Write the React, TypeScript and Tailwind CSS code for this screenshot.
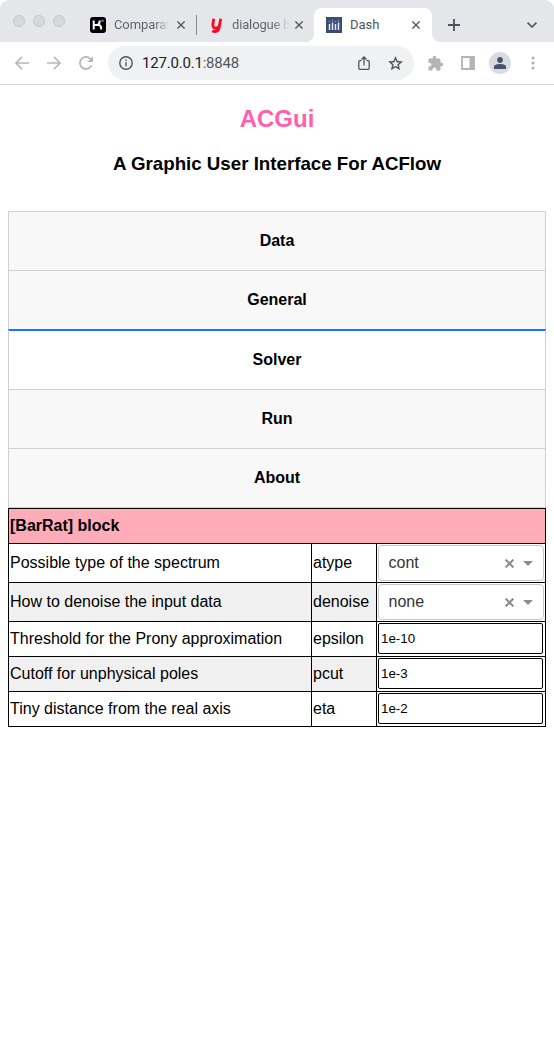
import React from "react";

function Close({ className = "" }: { className?: string }) {
  return (
    <svg viewBox="0 0 8 8" className={"size-2 shrink-0 " + className} stroke="#55585d" strokeWidth="1.4" fill="none">
      <path d="M.4.4l7.2 7.2M7.6.4L.4 7.6" />
    </svg>
  );
}

function TabStrip() {
  return (
    <div className="flex h-[42px] rounded-t-[9px] bg-[#e5e6ea] text-[13px] text-[#5f6368]">
      <div className="flex h-[42px] w-[90px] shrink-0 items-center gap-2 pl-[13px]">
        {[0, 1, 2].map((i) => (
          <span key={i} className="size-3 rounded-full border border-[#c6c6c8] bg-[#d8d8d9]" />
        ))}
      </div>
      <div className="flex w-[106px] shrink-0 items-center pt-2">
        <svg viewBox="0 0 16 16" className="size-4 shrink-0">
          <rect width="16" height="16" rx="3" fill="#000" />
          <path d="M3.700 3.500v9M3.700 8h4.800M6.500 8c2 0 3.200-1.500 3.200-4.500M7.500 8h1c1.800 0 2.700 1 2.700 4.500" stroke="#fff" strokeWidth="2" fill="none" />
          <circle cx="12.500" cy="3.800" r="1.300" fill="#1688f5" />
        </svg>
        <span className="ml-2 w-[55px] bg-linear-to-r from-[#5f6368] from-75% to-[#5f636800] bg-clip-text tracking-[-0.1px] whitespace-nowrap text-transparent">Comparat</span>
        <Close className="ml-2" />
      </div>
      <div className="flex w-[118px] shrink-0 items-center pt-2">
        <span className="h-5 w-px bg-[#85888d]" />
        <svg viewBox="0 0 12 15" className="ml-[14px] h-[15px] w-3 shrink-0">
          <path d="M2.700.7L1.900 6.500C1.600 9 2.800 10.100 4.700 10.100c1.700 0 2.900-.8 3.600-2.200L9.800.7M9.300 3L8.100 9.800C7.600 12.500 6.300 13.500 4 13.500c-1.100 0-2-.2-2.700-.7" stroke="#fa0a24" strokeWidth="2.800" fill="none" />
        </svg>
        <span className="ml-[9px] w-[58px] bg-linear-to-r from-[#5f6368] from-70% to-[#5f636800] bg-clip-text tracking-[-0.15px] whitespace-nowrap text-transparent">dialogue b</span>
        <Close className="ml-[5px]" />
      </div>
      <div className="relative mt-2 flex h-[34px] w-[118px] shrink-0 items-center rounded-t-lg bg-white">
        <span className="absolute bottom-0 -left-2 size-2 bg-[radial-gradient(circle_at_0_0,transparent_7.5px,white_8px)]" />
        <span className="absolute -right-2 bottom-0 size-2 bg-[radial-gradient(circle_at_100%_0,transparent_7.5px,white_8px)]" />
        <svg viewBox="0 0 16 16" className="ml-3 size-4">
          <path fill="#3b4b72" d="M0 0h16v16H0z" />
          <path d="M3.500 7v6M6.500 5.500V13M9.500 7v6M12.500 5.500V13" stroke="#e4e8f0" strokeWidth="1.500" />
          <path d="M2.800 4.500h1.400M5.800 3.500h1.400M8.800 4.500h1.400M11.800 3.500h1.400" stroke="#69a7b0" strokeWidth="1.400" />
        </svg>
        <span className="ml-2 w-[62px] text-[#50545a]">Dash</span>
        <Close />
      </div>
      <svg viewBox="0 0 12 12" className="mt-[19px] ml-4 size-3 shrink-0" stroke="#4e5157" strokeWidth="1.800">
        <path d="M6 0v12M0 6h12" />
      </svg>
      <svg viewBox="0 0 10 6" className="mt-[22px] ml-[67px] h-1.5 w-2.5 shrink-0" stroke="#55585d" strokeWidth="1.700" fill="none">
        <path d="M.6.6L5 5 9.400.6" />
      </svg>
    </div>
  );
}

function Toolbar() {
  return (
    <div className="flex h-[43px] items-center border-b border-[#d2d2d2] bg-white">
      <svg viewBox="0 0 14 14" className="ml-[15px] size-3.5 shrink-0" stroke="#b5b7b9" strokeWidth="1.700" fill="none">
        <path d="M14 7H1.300M7 .8L.9 7 7 13.200" />
      </svg>
      <svg viewBox="0 0 14 14" className="ml-[18px] size-3.5 shrink-0" stroke="#b5b7b9" strokeWidth="1.700" fill="none">
        <path d="M0 7h12.700M7 .8L13.100 7 7 13.200" />
      </svg>
      <svg viewBox="0 0 14 14" className="ml-[18px] size-3.5 shrink-0" fill="none">
        <path d="M12.500 9.300A6 6 0 1 1 11.300 2.800L12 3.500" stroke="#b5b7b9" strokeWidth="1.800" />
        <path d="M14 .2V6H8.200z" fill="#b5b7b9" />
      </svg>
      <div className="ml-[15px] flex h-[34px] w-[306px] shrink-0 items-center rounded-full bg-[#eff1f3] pl-[11px]">
        <svg viewBox="0 0 14 14" className="size-3.5" fill="none" stroke="#4f5358" strokeWidth="1.400">
          <circle cx="7" cy="7" r="6.200" />
          <path d="M7 6.300v4M7 3.500v1.500" />
        </svg>
        <span className="ml-[9px] w-[216px] text-[15px] tracking-[-0.2px] whitespace-nowrap text-[#202124]">
          127.0.0.1<span className="text-[#53575c]">:8848</span>
        </span>
        <svg viewBox="0 0 12 15" className="h-[15px] w-3 shrink-0" fill="none" stroke="#505459" strokeWidth="1.300">
          <path d="M3.500 4.700H1.800Q.8 4.700.8 5.700v6.600q0 1 1 1h8.400q1 0 1-1V5.700q0-1-1-1H8.500M6 9.500V1.200M3.500 3.500L6 1l2.500 2.500" />
        </svg>
        <svg viewBox="0 0 24 24" className="ml-[17px] size-[17px] shrink-0" fill="#505459" stroke="#505459" strokeWidth=".4">
          <path d="M22 9.240l-7.190-.62L12 2 9.190 8.630 2 9.240l5.460 4.730L5.820 21 12 17.270 18.180 21l-1.630-7.030L22 9.240zM12 15.400l-3.760 2.270 1-4.280-3.320-2.880 4.380-.38L12 6.100l1.710 4.040 4.380.38-3.320 2.880 1 4.280L12 15.400z" />
        </svg>
      </div>
      <svg viewBox="0 0 24 24" className="ml-[13px] size-[17px] shrink-0" fill="#b2b4b6">
        <path d="M20.500 11H19V7c0-1.100-.9-2-2-2h-4V3.500a2.500 2.500 0 0 0-5 0V5H4c-1.100 0-2 .9-2 2v3.800h1.500a2.700 2.700 0 0 1 0 5.400H2V20c0 1.100.9 2 2 2h3.800v-1.500a2.700 2.700 0 0 1 5.400 0V22H17c1.100 0 2-.9 2-2v-4h1.500a2.500 2.500 0 0 0 0-5z" />
      </svg>
      <svg viewBox="0 0 14 14" className="ml-[17px] size-3.5 shrink-0" fill="none">
        <path d="M1 1h12v12H1z" stroke="#b2b4b6" strokeWidth="1.800" />
        <path d="M8.500 1H13v12H8.500z" fill="#b2b4b6" />
      </svg>
      <span className="ml-3.5 flex size-[22px] shrink-0 items-center justify-center rounded-full bg-[#d8dce2]">
        <svg viewBox="0 0 12 12" className="size-3" fill="#48526a">
          <circle cx="6" cy="3" r="2.900" />
          <path d="M0 12V9.600C0 7.900 3.200 7 6 7s6 .9 6 2.600V12z" />
        </svg>
      </span>
      <svg viewBox="0 0 4 14" className="ml-[19.500px] h-3.5 w-1 shrink-0" fill="#adafb2">
        <circle cx="2" cy="2" r="1.500" />
        <circle cx="2" cy="7" r="1.500" />
        <circle cx="2" cy="12" r="1.500" />
      </svg>
    </div>
  );
}

const tabs = [
  { label: "Data", style: "h-[59px] border-t border-t-[#d0d0d0] bg-[#f8f8f8]" },
  { label: "General", style: "h-[59px] border-t border-t-[#d0d0d0] bg-[#f8f8f8]" },
  { label: "Solver", style: "h-[60px] border-t-2 border-t-[#1975fa] bg-white" },
  { label: "Run", style: "h-[59px] border-t border-t-[#d0d0d0] bg-[#f8f8f8]" },
  { label: "About", style: "h-[60px] border-y border-y-[#d0d0d0] bg-[#f8f8f8]" },
];

const rows = [
  { text: "Possible type of the spectrum", key: "atype", value: "cont", select: true },
  { text: "How to denoise the input data", key: "denoise", value: "none", select: true },
  { text: "Threshold for the Prony approximation", key: "epsilon", value: "1e-10" },
  { text: "Cutoff for unphysical poles", key: "pcut", value: "1e-3" },
  { text: "Tiny distance from the real axis", key: "eta", value: "1e-2" },
];

function Select({ value }: { value: string }) {
  return (
    <div className="flex h-9 w-full items-center rounded border border-[#c6c6c6] bg-white pl-[9.5px] text-[#333]">
      <span className="w-[116.500px]">{value}</span>
      <svg viewBox="0 0 9 9" className="mt-px size-[9px] shrink-0" stroke="#8e8e8e" strokeWidth="2.200">
        <path d="M.6.6l7.800 7.800M8.400.6L.6 8.400" />
      </svg>
      <svg viewBox="0 0 10 5" className="ml-[9px] h-[5px] w-2.5 shrink-0" fill="#8e8e8e">
        <path d="M0 0h10L5 5z" />
      </svg>
    </div>
  );
}

export default function App() {
  return (
    <div className="min-h-[1057px] w-[554px] bg-white font-['Liberation_Sans',Arial,sans-serif] text-base text-black">
      <header className="font-[Roboto,sans-serif]">
        <TabStrip />
        <Toolbar />
      </header>
      <main className="px-2">
        <h1 className="pt-[20px] text-center text-[24px] leading-7 font-bold text-[#ff60ad]">ACGui</h1>
        <h2 className="pt-[20px] text-center text-[18.720px] leading-[22px] font-bold">A Graphic User Interface For ACFlow</h2>
        <nav className="mt-[36px]">
          {tabs.map((t) => (
            <div key={t.label} className={"flex items-center justify-center border-x border-x-[#d0d0d0] font-bold " + t.style}>
              {t.label}
            </div>
          ))}
        </nav>
        <section className="border-r border-b border-black">
          <div className="flex h-[35px] items-center border-t border-l border-black bg-[#ffacb9] pl-px font-bold">[BarRat] block</div>
          {rows.map((r, i) => (
            <div
              key={r.key}
              className={"grid grid-cols-[303px_65px_169px] " + (r.select ? "h-[39px] " : "h-[35px] ") + (i % 2 ? "bg-[#f0f0f0]" : "bg-white")}
            >
              <div className="flex items-center border-t border-l border-black pl-px">{r.text}</div>
              <div className="flex items-center border-t border-l border-black pl-px">{r.key}</div>
              <div className="border-t border-l border-black bg-white p-px">
                {r.select ? (
                  <Select value={r.value} />
                ) : (
                  <input
                    defaultValue={r.value}
                    className="block h-[31px] w-[165px] rounded-[2px] border border-black bg-white px-0.5 text-[13.333px] outline-none"
                  />
                )}
              </div>
            </div>
          ))}
        </section>
      </main>
    </div>
  );
}
